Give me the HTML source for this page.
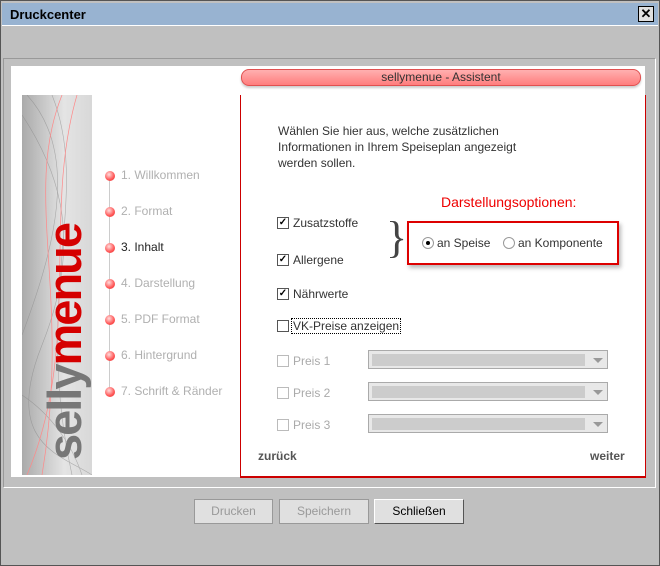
<!DOCTYPE html>
<html><head><style>
body{margin:0;width:660px;height:566px;overflow:hidden;font-family:"Liberation Sans",sans-serif;font-size:12px;}
.win{position:absolute;left:0;top:0;width:658px;height:564px;border:1px solid #555;background:#c0c0c0;}
.title{position:absolute;left:1px;top:2px;width:656px;height:22px;background:#98b3d1;border-bottom:1px solid #fff;}
.title span{position:absolute;left:8px;top:4px;font-weight:bold;font-size:13px;color:#000}
.x{position:absolute;right:4px;top:3px;width:14px;height:14px;border:1px solid #000;background:#e0e0e0;font-size:13px;line-height:13px;text-align:center;font-weight:bold}
.panel{position:absolute;left:3px;top:58px;width:651px;height:428px;border:1px solid #999;border-right-color:#fff;border-bottom-color:#fff;}
.white{position:absolute;left:11px;top:66px;width:634px;height:411px;background:#fff}
.pill{position:absolute;left:241px;top:69px;width:398px;height:15px;border-radius:8px;background:linear-gradient(#ffb0b0,#ff7d7d);border:1px solid #e05050;text-align:center;font-size:12px;line-height:15px;color:#333;box-shadow:0 2px 2px #ccc}
.red{position:absolute;left:240px;top:95px;width:404px;height:381px;border-left:1px solid #c00;border-right:1px solid #c00;border-bottom:2px solid #c00}
.img{position:absolute;left:22px;top:95px;width:70px;height:380px;background:linear-gradient(90deg,#aaa,#e4e4e4 60%,#d8d8d8);overflow:hidden}
.logo{position:absolute;left:-97px;top:220px;width:280px;height:54px;line-height:54px;transform:rotate(-90deg);font-weight:bold;font-size:47px;letter-spacing:-2px;color:#777;white-space:nowrap;text-align:center}
.logo b{color:#d50000}
.steps{position:absolute;left:110px;top:168px}
.step{position:absolute;left:0;white-space:nowrap;color:#b0b0b0;font-size:12px}
.step i{position:absolute;left:-5px;top:3px;width:10px;height:10px;border-radius:50%;background:radial-gradient(circle at 40% 35%,#fdd,#f55 60%,#d33)}
.step span{position:absolute;left:11px;top:0}
.vline{position:absolute;left:109px;top:178px;width:1px;height:215px;background:#ccc}
.t{position:absolute;color:#333;white-space:nowrap}
.cb{position:absolute;width:10px;height:10px;border:1px solid #555;background:#fff;font-size:10px;line-height:10px;text-align:center;font-weight:bold}
.cb.d{border-color:#bbb}
.sel{position:absolute;left:368px;width:238px;height:17px;border:1px solid #aaa;background:#e8e8e8}
.sel div{position:absolute;left:3px;top:3px;width:213px;height:12px;background:#ccc}
.sel s{position:absolute;right:4px;top:7px;border:5px solid transparent;border-top:5px solid #999;border-bottom:none}
.btn{position:absolute;top:499px;height:23px;border:1px solid #999;background:#e0e0e0;text-align:center;line-height:23px;color:#999;font-size:12px}
</style></head><body>
<div class="win">
<div class="title"><span>Druckcenter</span><div class="x">✕</div></div>
</div>
<div class="panel"></div>
<div class="white"></div>
<div class="pill">sellymenue - Assistent</div>
<div class="red"></div>
<div class="img">
<svg width="70" height="380" style="position:absolute;left:0;top:0"><g fill="none" stroke="#888" stroke-width="0.6" opacity=".6"><path d="M0 20 C40 80 60 150 20 250 S40 360 70 380"/><path d="M5 0 C60 60 30 160 0 240"/><path d="M30 0 C70 100 10 200 50 380"/><path d="M0 300 C30 320 50 350 60 380"/></g><g fill="none" stroke="#f88" stroke-width="0.7"><path d="M40 0 C0 100 50 200 20 380"/><path d="M55 0 C20 120 60 250 5 380"/></g></svg>
<div class="logo">selly<b>menue</b></div>
</div>
<div class="vline"></div>
<div class="steps">
<div class="step" style="top:0"><i></i><span>1. Willkommen</span></div>
<div class="step" style="top:36px"><i></i><span>2. Format</span></div>
<div class="step" style="top:72px;color:#222"><i></i><span>3. Inhalt</span></div>
<div class="step" style="top:108px"><i></i><span>4. Darstellung</span></div>
<div class="step" style="top:144px"><i></i><span>5. PDF Format</span></div>
<div class="step" style="top:180px"><i></i><span>6. Hintergrund</span></div>
<div class="step" style="top:216px"><i></i><span>7. Schrift &amp; Ränder</span></div>
</div>
<div class="t" style="left:278px;top:123px;line-height:16px">Wählen Sie hier aus, welche zusätzlichen<br>Informationen in Ihrem Speiseplan angezeigt<br>werden sollen.</div>
<div class="t" style="left:441px;top:194px;color:#e00;font-size:14px">Darstellungsoptionen:</div>
<div class="t" style="left:386px;top:212px;font-size:44px;color:#444;font-family:'Liberation Serif',serif">}</div>
<div style="position:absolute;left:407px;top:221px;width:208px;height:40px;border:2px solid #d00;box-shadow:2px 3px 4px #bbb"></div>
<div style="position:absolute;left:422px;top:237px;width:10px;height:10px;border:1px solid #999;border-radius:50%;background:#fff"><div style="width:4px;height:4px;background:#000;border-radius:50%;margin:3px"></div></div>
<div class="t" style="left:437px;top:236px">an Speise</div>
<div style="position:absolute;left:503px;top:237px;width:10px;height:10px;border:1px solid #999;border-radius:50%;background:#fff"></div>
<div class="t" style="left:518px;top:236px">an Komponente</div>
<div class="cb" style="left:277px;top:217px">✓</div><div class="t" style="left:293px;top:216px">Zusatzstoffe</div>
<div class="cb" style="left:277px;top:254px">✓</div><div class="t" style="left:293px;top:253px">Allergene</div>
<div class="cb" style="left:277px;top:288px">✓</div><div class="t" style="left:293px;top:287px">Nährwerte</div>
<div class="cb" style="left:277px;top:320px"></div><div class="t" style="left:291px;top:318px;border:1px dotted #000;padding:0 1px">VK-Preise anzeigen</div>
<div class="cb d" style="left:277px;top:355px"></div><div class="t" style="left:293px;top:354px;color:#aaa">Preis 1</div>
<div class="cb d" style="left:277px;top:387px"></div><div class="t" style="left:293px;top:386px;color:#aaa">Preis 2</div>
<div class="cb d" style="left:277px;top:419px"></div><div class="t" style="left:293px;top:418px;color:#aaa">Preis 3</div>
<div class="sel" style="top:350px"><div></div><s></s></div>
<div class="sel" style="top:382px"><div></div><s></s></div>
<div class="sel" style="top:414px"><div></div><s></s></div>
<div class="t" style="left:258px;top:449px;font-weight:bold;color:#555">zurück</div>
<div class="t" style="left:590px;top:449px;font-weight:bold;color:#555">weiter</div>
<div class="btn" style="left:194px;width:77px">Drucken</div>
<div class="btn" style="left:279px;width:88px">Speichern</div>
<div class="btn" style="left:374px;width:88px;color:#000;border-color:#fff #555 #555 #fff">Schließen</div>
</body></html>
